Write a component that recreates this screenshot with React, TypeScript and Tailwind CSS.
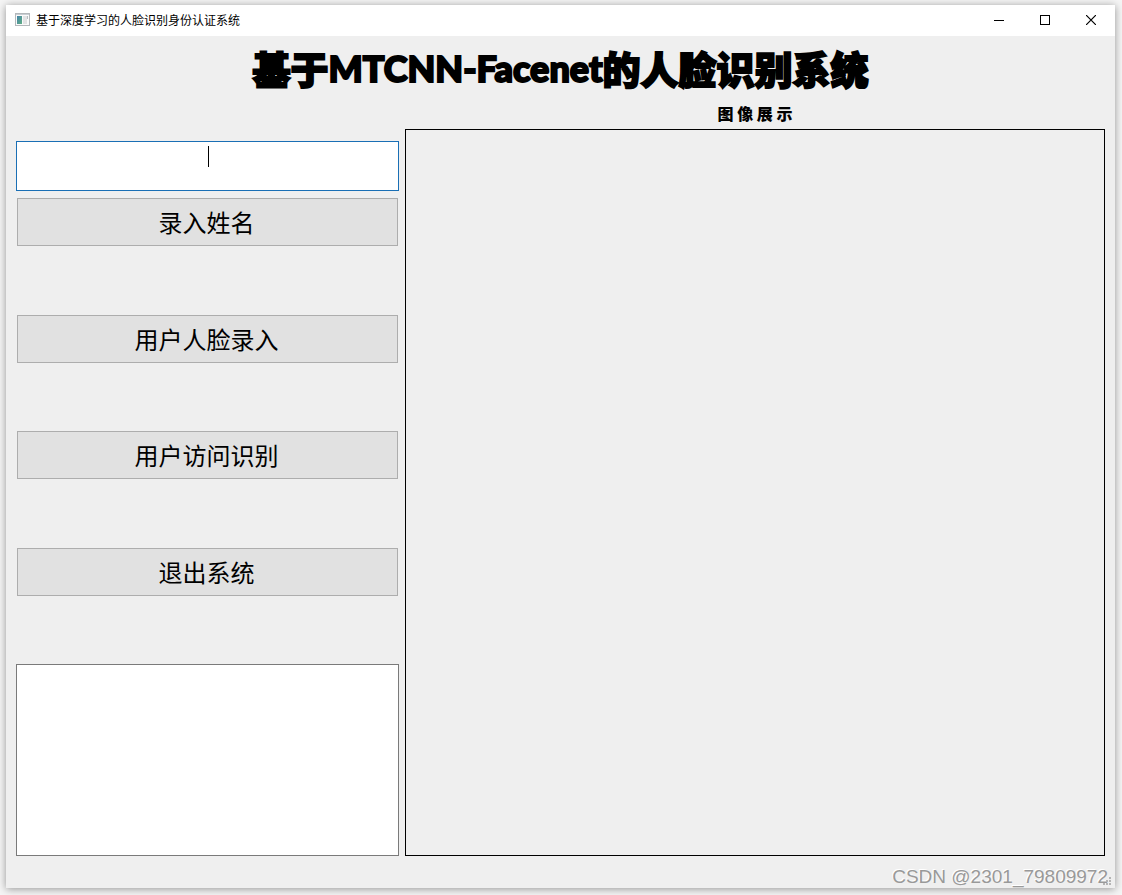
import { useState } from 'react';

const actions = ['录入姓名', '用户人脸录入', '用户访问识别', '退出系统'];

function AppIcon() {
  return (
    <svg width="15" height="14" viewBox="0 0 15 14" className="shrink-0">
      <defs>
        <linearGradient id="app-icon-pane" x1="0" y1="0" x2="1" y2="1">
          <stop offset="0" stopColor="#4684a8" />
          <stop offset="1" stopColor="#5fae84" />
        </linearGradient>
      </defs>
      <rect x="0.5" y="0.5" width="14" height="12" fill="#fafafa" stroke="#b4b8bb" />
      <rect x="1" y="1" width="13" height="1" fill="#c9ced3" />
      <rect x="2" y="3" width="5" height="8" fill="url(#app-icon-pane)" />
      <rect x="8" y="3" width="4" height="8" fill="#e2e3e4" />
      <rect x="12" y="3" width="1" height="3" fill="#b9bec2" />
    </svg>
  );
}

function TitleBar() {
  const controlClass = 'flex h-full w-[46px] items-center justify-center hover:bg-gray-200';
  return (
    <header className="flex h-[31px] items-start bg-white pr-px pl-[9px]">
      <div className="flex h-[30px] flex-1 items-center">
        <AppIcon />
        <span className="ml-1.5 text-[12px] leading-4 text-black">
          基于深度学习的人脸识别身份认证系统
        </span>
      </div>
      <div className="flex h-[30px]">
        <button className={controlClass} aria-label="最小化">
          <svg width="10" height="10" viewBox="0 0 10 10" shapeRendering="crispEdges">
            <path d="M0 5.5H10" stroke="#000" />
          </svg>
        </button>
        <button className={controlClass} aria-label="最大化">
          <svg width="10" height="10" viewBox="0 0 10 10" shapeRendering="crispEdges">
            <rect x="0.5" y="0.5" width="9" height="9" fill="none" stroke="#000" />
          </svg>
        </button>
        <button className={controlClass} aria-label="关闭">
          <svg width="10" height="10" viewBox="0 0 10 10">
            <path d="M0 0L10 10M10 0L0 10" stroke="#000" strokeWidth="1.2" />
          </svg>
        </button>
      </div>
    </header>
  );
}

function PanelButton({ label }: { label: string }) {
  return (
    <button className="mx-px block h-12 border border-[#adadad] bg-[#e1e1e1] pr-0.5 text-[24px] leading-8 text-black hover:border-[#0078d7] hover:bg-[#e5f1fb]">
      {label}
    </button>
  );
}

function SizeGrip() {
  return (
    <svg width="9" height="9" viewBox="0 0 9 9" fill="#b4b4b4" shapeRendering="crispEdges">
      <rect x="6" y="0" width="2" height="2" />
      <rect x="3" y="3" width="2" height="2" />
      <rect x="6" y="3" width="2" height="2" />
      <rect x="0" y="6" width="2" height="2" />
      <rect x="3" y="6" width="2" height="2" />
      <rect x="6" y="6" width="2" height="2" />
    </svg>
  );
}

export default function App() {
  const [name, setName] = useState('');
  const [log, setLog] = useState('');

  return (
    <div className="flex min-h-screen bg-[#f5f5f5] pt-[5px] pr-[7px] pb-[7px] pl-[6px] font-['Noto_Sans_CJK_SC',sans-serif]">
      <div className="flex flex-1 flex-col bg-[#efefef] shadow-[0_1px_8px_rgba(0,0,0,0.4)]">
        <TitleBar />
        <main className="flex flex-1 flex-col px-2.5">
          <h1 className="flex h-16 items-center justify-center text-[38px] leading-[64px] font-black whitespace-nowrap text-black [-webkit-text-stroke:2px_black] [stroke-linejoin:round]">
            基于
            <span className="font-['Lato',sans-serif] text-[36px]">MTCNN-Facenet</span>
            的人脸识别系统
          </h1>

          <div className="grid flex-1 grid-cols-[383fr_700fr] gap-x-1.5">
            {/* 左侧操作区 */}
            <section className="flex flex-col gap-[7px] pt-[41px]">
              <div className="relative">
                <input
                  aria-label="姓名"
                  value={name}
                  onChange={(e) => setName(e.target.value)}
                  className="block h-[50px] w-full border border-[#1a6fb5] bg-white text-center text-[16px] caret-transparent outline-none"
                />
                <span className="pointer-events-none absolute top-[5px] left-1/2 h-[21px] w-px bg-black" />
              </div>
              <div className="flex flex-1 flex-col justify-between">
                {actions.map((label) => (
                  <PanelButton key={label} label={label} />
                ))}
                <textarea
                  aria-label="日志"
                  value={log}
                  onChange={(e) => setLog(e.target.value)}
                  className="block h-48 w-full resize-none border border-[#7a7a7a] bg-white p-1 text-[14px] outline-none"
                />
              </div>
            </section>

            {/* 右侧图像区 */}
            <section className="flex flex-col">
              <h2 className="h-[29px] text-center text-[16px] leading-[26px] font-black text-black">
                图 像 展 示
              </h2>
              <div className="flex-1 border border-black" />
            </section>
          </div>
        </main>

        <footer className="relative flex h-8 items-end justify-end pr-[7px]">
          <span className="font-['Liberation_Sans',sans-serif] text-[19px] leading-[22px] text-[#999] [text-shadow:-1px_-1px_0_#fff]">
            CSDN @2301_79809972
          </span>
          <span className="absolute right-[3px] bottom-[2px]">
            <SizeGrip />
          </span>
        </footer>
      </div>
    </div>
  );
}
